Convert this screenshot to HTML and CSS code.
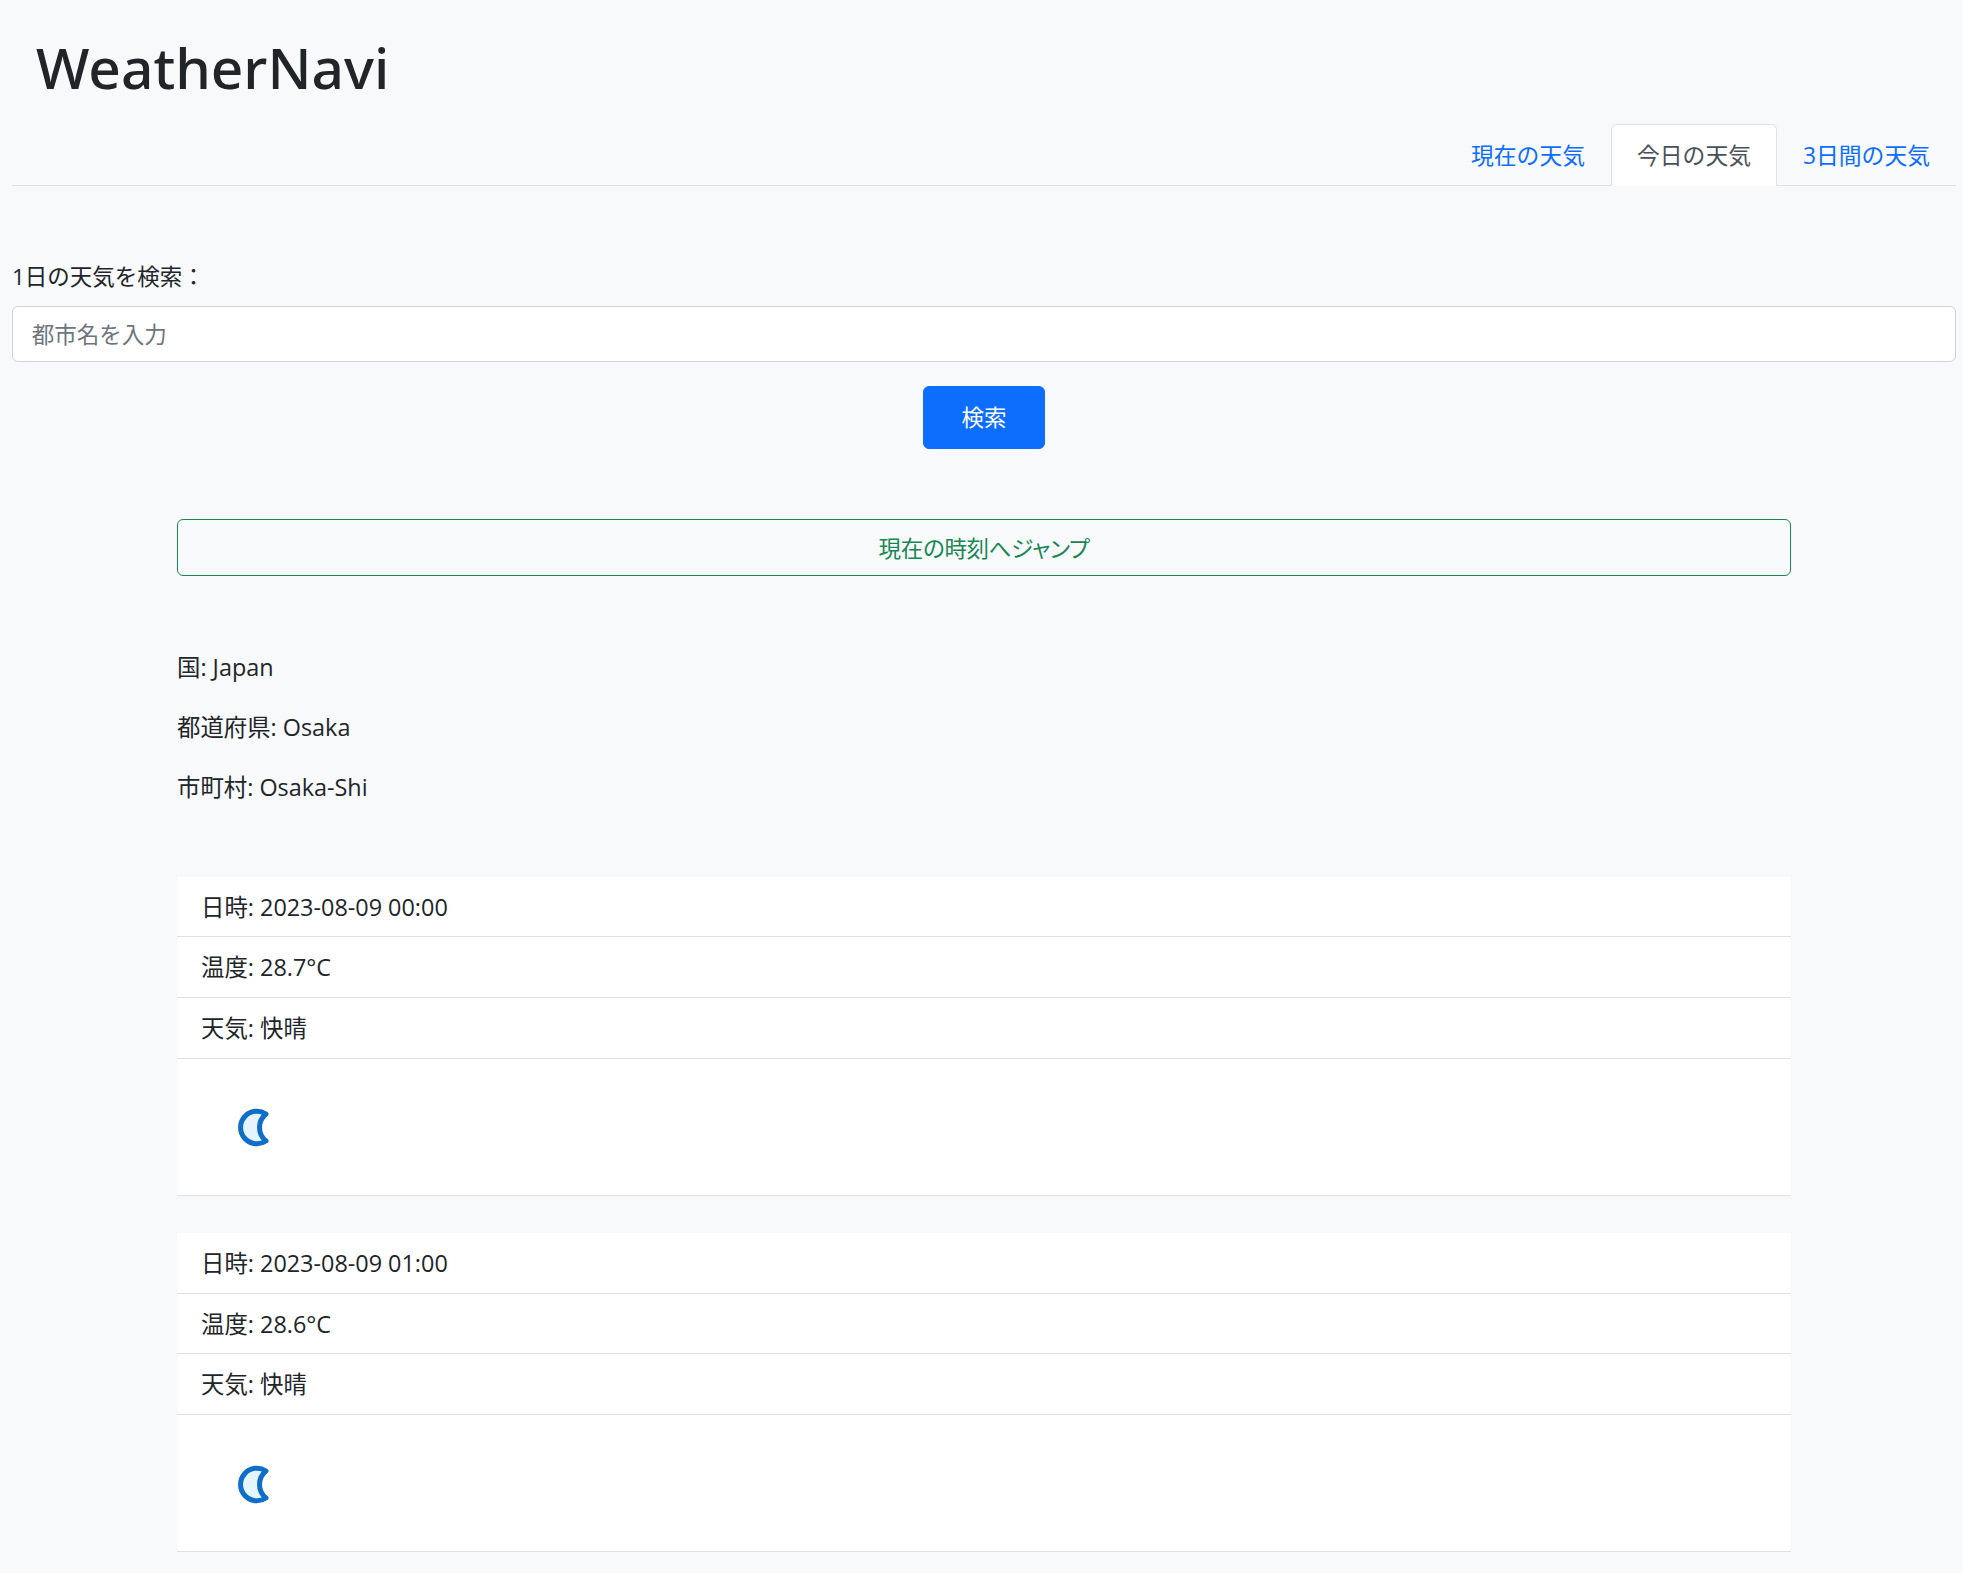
FILE: index.html
```html
<!DOCTYPE html>
<html lang="ja">
  <head>
    <meta charset="UTF-8" />
    <meta name="viewport" content="width=device-width, initial-scale=1.0" />
    <title>WeatherNavi</title>
    <link rel="stylesheet" href="styles.css">
  </head>
  <body>
    <header class="site-header">
      <h1 class="site-title">WeatherNavi</h1>
      <nav class="tabs">
        <a class="tab" href="#">現在の天気</a>
        <a class="tab tab-active" href="#">今日の天気</a>
        <a class="tab" href="#">3日間の天気</a>
      </nav>
    </header>

    <form class="search-form">
      <label class="search-label" for="city">1日の天気を検索：</label>
      <input class="search-input" type="text" id="city" placeholder="都市名を入力" />
      <button class="search-button" type="button">検索</button>
    </form>

    <main class="results">
      <button class="jump-button" type="button">現在の時刻へジャンプ</button>

      <div class="location">
        <p>国: Japan</p>
        <p>都道府県: Osaka</p>
        <p>市町村: Osaka-Shi</p>
      </div>

      <ul class="forecast">
        <li>日時: 2023-08-09 00:00</li>
        <li>温度: 28.7°C</li>
        <li>天気: 快晴</li>
        <li class="forecast-icon">
          <svg width="111" height="111" viewBox="0 0 111 111">
            <path class="moon" d="M64 43A16.3 16.3 0 1 0 64 70A17.3 17.3 0 0 1 64 43Z" />
          </svg>
        </li>
      </ul>

      <ul class="forecast">
        <li>日時: 2023-08-09 01:00</li>
        <li>温度: 28.6°C</li>
        <li>天気: 快晴</li>
        <li class="forecast-icon">
          <svg width="111" height="111" viewBox="0 0 111 111">
            <path class="moon" d="M64 43A16.3 16.3 0 1 0 64 70A17.3 17.3 0 0 1 64 43Z" />
          </svg>
        </li>
      </ul>
    </main>
  </body>
</html>
```

FILE: styles.css
```css
html {
  overflow: hidden;
}
body {
  margin: 0;
  height: 1573px;
  padding: 0 7px 0 12px;
  overflow: hidden;
  background-color: #f8f9fa;
  color: #212529;
  font-family: "Open Sans", "Noto Sans CJK JP", sans-serif;
  font-size: 22.5px;
  line-height: 33.75px;
}
.site-title {
  margin: 0;
  padding: 30px 24px 19px;
  font-family: "Noto Sans", sans-serif;
  font-size: 56.8px;
  font-weight: 500;
  line-height: 75px;
}
.tabs {
  display: flex;
  justify-content: flex-end;
  border-bottom: 1px solid #dee2e6;
}
.tab {
  margin-bottom: -1px;
  padding: 14px 25px 12px;
  border: 1px solid transparent;
  border-radius: 6px 6px 0 0;
  color: #0d6efd;
  font-size: 22.8px;
  text-decoration: none;
}
.tab-active {
  background-color: #fff;
  border-color: #dee2e6 #dee2e6 #fff;
  color: #495057;
}
.search-form {
  display: flex;
  flex-direction: column;
  align-items: center;
  padding-top: 74px;
}
.search-label {
  align-self: flex-start;
  margin-bottom: 12.5px;
}
.search-input {
  width: 100%;
  box-sizing: border-box;
  padding: 11px 18.75px 9.5px;
  background-color: #fff;
  border: 1px solid #ced4da;
  border-radius: 6px;
  color: #212529;
  font: inherit;
}
.search-input::placeholder {
  color: #6c757d;
}
.search-button {
  margin-top: 24px;
  padding: 13.25px 37.5px;
  background-color: #0d6efd;
  border: 1px solid #0d6efd;
  border-radius: 6px;
  color: #fff;
  font: inherit;
}
.results {
  padding: 70.5px 165px 0 165px;
}
.jump-button {
  display: block;
  width: 100%;
  padding: 11.75px 18.75px 9.25px;
  background: transparent;
  border: 1px solid #198754;
  border-radius: 6px;
  color: #198754;
  font: inherit;
  font-feature-settings: "palt";
  letter-spacing: -0.3px;
}
.location {
  padding-top: 75.5px;
  font-size: 23.4px;
}
.location p {
  margin: 0 0 26px;
}
.forecast {
  margin: 72px 0 0;
  padding: 0;
  list-style: none;
  background-color: #fff;
  font-size: 23.4px;
}
.forecast + .forecast {
  margin-top: 37px;
}
.forecast li {
  padding: 14px 24px 12px;
  border-bottom: 1px solid #dee2e6;
}
.forecast .forecast-icon {
  padding: 12.5px 25px;
}
.forecast-icon svg {
  display: block;
}
.moon {
  fill: #e4f5fd;
  stroke: #0f6fc8;
  stroke-width: 5;
  stroke-linejoin: round;
  filter: blur(0.5px);
}
```
